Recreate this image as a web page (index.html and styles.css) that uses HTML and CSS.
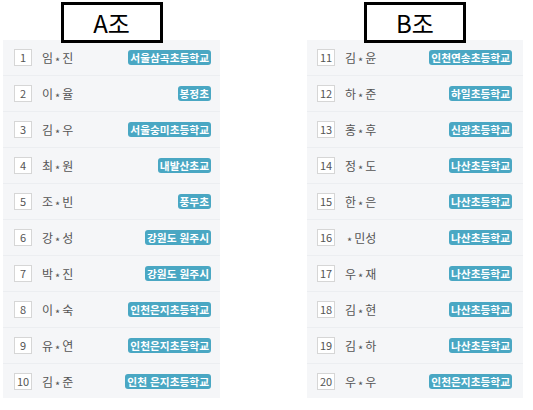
FILE: index.html
```html
<!DOCTYPE html>
<html lang="ko">
<head>
<meta charset="utf-8">
<link rel="stylesheet" href="styles.css">
</head>
<body>
<div class="wrap">
  <section class="group">
    <div class="title">A조</div>
    <ul class="panel">
      <li class="row"><span class="num">1</span><span class="name">임<i>*</i>진</span><span class="badge">서울삼곡초등학교</span></li>
      <li class="row"><span class="num">2</span><span class="name">이<i>*</i>율</span><span class="badge">봉정초</span></li>
      <li class="row"><span class="num">3</span><span class="name">김<i>*</i>우</span><span class="badge">서울숭미초등학교</span></li>
      <li class="row"><span class="num">4</span><span class="name">최<i>*</i>원</span><span class="badge">내발산초교</span></li>
      <li class="row"><span class="num">5</span><span class="name">조<i>*</i>빈</span><span class="badge">풍무초</span></li>
      <li class="row"><span class="num">6</span><span class="name">강<i>*</i>성</span><span class="badge">강원도 원주시</span></li>
      <li class="row"><span class="num">7</span><span class="name">박<i>*</i>진</span><span class="badge">강원도 원주시</span></li>
      <li class="row"><span class="num">8</span><span class="name">이<i>*</i>숙</span><span class="badge">인천은지초등학교</span></li>
      <li class="row"><span class="num">9</span><span class="name">유<i>*</i>연</span><span class="badge">인천은지초등학교</span></li>
      <li class="row"><span class="num">10</span><span class="name">김<i>*</i>준</span><span class="badge">인천 은지초등학교</span></li>
    </ul>
  </section>
  <section class="group">
    <div class="title">B조</div>
    <ul class="panel">
      <li class="row"><span class="num">11</span><span class="name">김<i>*</i>윤</span><span class="badge">인천연송초등학교</span></li>
      <li class="row"><span class="num">12</span><span class="name">하<i>*</i>준</span><span class="badge">하일초등학교</span></li>
      <li class="row"><span class="num">13</span><span class="name">홍<i>*</i>후</span><span class="badge">신광초등학교</span></li>
      <li class="row"><span class="num">14</span><span class="name">정<i>*</i>도</span><span class="badge">나산초등학교</span></li>
      <li class="row"><span class="num">15</span><span class="name">한<i>*</i>은</span><span class="badge">나산초등학교</span></li>
      <li class="row"><span class="num">16</span><span class="name"><i>*</i>민성</span><span class="badge">나산초등학교</span></li>
      <li class="row"><span class="num">17</span><span class="name">우<i>*</i>재</span><span class="badge">나산초등학교</span></li>
      <li class="row"><span class="num">18</span><span class="name">김<i>*</i>현</span><span class="badge">나산초등학교</span></li>
      <li class="row"><span class="num">19</span><span class="name">김<i>*</i>하</span><span class="badge">나산초등학교</span></li>
      <li class="row"><span class="num">20</span><span class="name">우<i>*</i>우</span><span class="badge">인천은지초등학교</span></li>
    </ul>
  </section>
</div>
</body>
</html>
```
FILE: styles.css
```css
html, body {
  margin: 0;
  padding: 0;
  background: #ffffff;
  font-family: "Noto Sans CJK KR", "Noto Sans", sans-serif;
}
.wrap {
  display: flex;
  gap: 87px;
  padding: 2px 0 0 3px;
}
.group {
  display: flex;
  flex-direction: column;
  align-items: center;
}
.group:first-child { width: 217px; }
.group:last-child { width: 216px; }
.title {
  position: relative;
  z-index: 1;
  box-sizing: border-box;
  width: 102px;
  height: 41px;
  border: 3px solid #000;
  background: #fff;
  font-size: 24px;
  line-height: 35px;
  text-align: center;
  color: #000;
}
.panel {
  list-style: none;
  margin: -3px 0 0 0;
  padding: 0;
  width: 100%;
  height: 358px;
  overflow: hidden;
  background: #f5f6f8;
}
.row {
  display: flex;
  align-items: center;
  height: 36px;
  box-sizing: border-box;
  padding: 0 9px 0 11px;
  border-bottom: 1px solid #eceef1;
}
.group:last-child .row { padding: 0 11px 0 10px; }
.num {
  box-sizing: border-box;
  width: 18px;
  height: 17px;
  border: 1px solid #d6d6d6;
  background: #fff;
  font-size: 11px;
  line-height: 15px;
  text-align: center;
  color: #555;
}
.name {
  margin-left: 10px;
  font-size: 12px;
  color: #555;
}
.name i {
  font-style: normal;
  display: inline-block;
  margin: 0 2px;
  transform: translateY(3px);
  font-size: 11px;
}
.badge {
  margin-left: auto;
  background: #4aa7c3;
  color: #fff;
  font-weight: 700;
  font-size: 10.7px;
  line-height: 15px;
  padding: 0 2px;
  border-radius: 3px;
  white-space: nowrap;
}
```
